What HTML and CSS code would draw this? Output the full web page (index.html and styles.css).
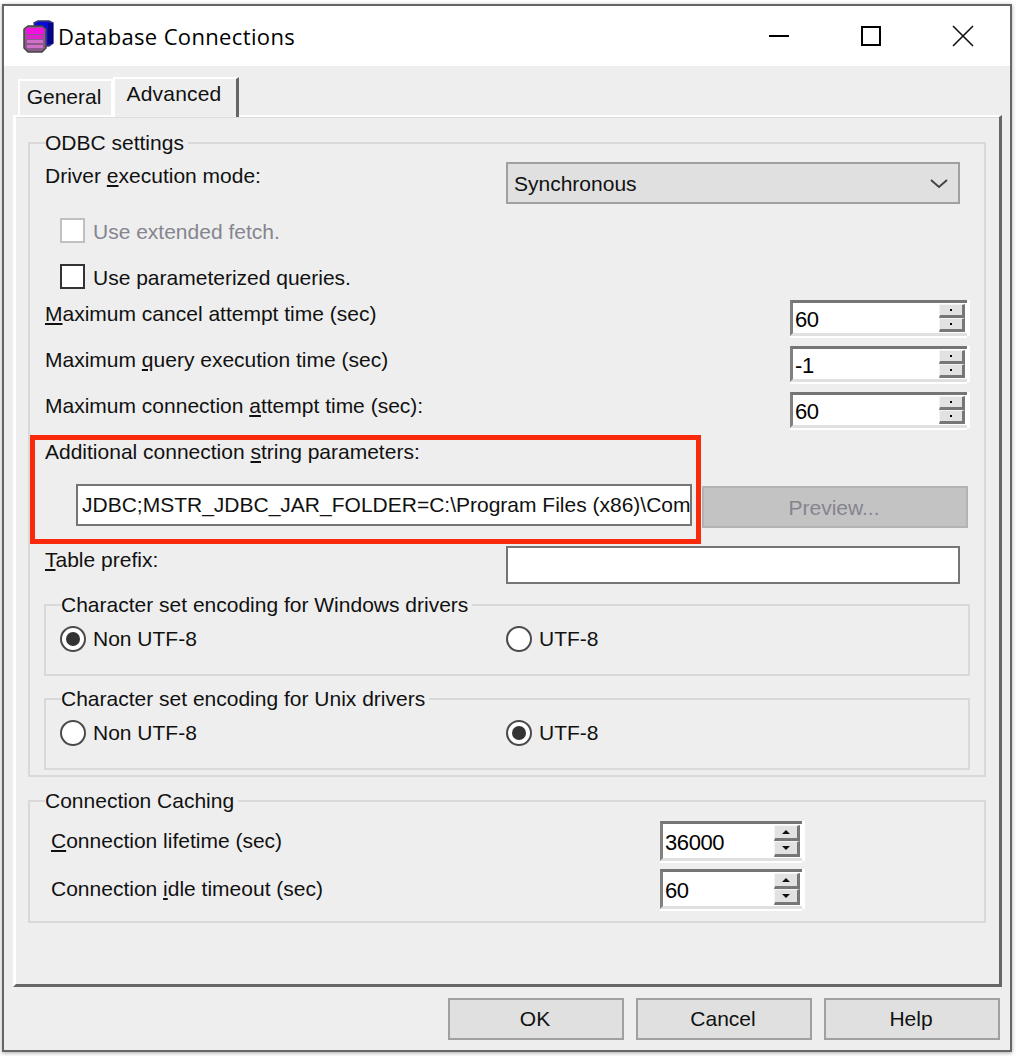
FILE: index.html
```html
<!DOCTYPE html>
<html lang="en">
<head>
    <meta charset="UTF-8">
    <title>Database Connections</title>
    <link rel="stylesheet" href="styles.css">
</head>
<body>

<div class="window">
    <!-- Title bar -->
    <div class="titlebar">
        <svg class="app-icon" width="32" height="34" viewBox="0 0 32 34">
            <path d="M12 4 L16 2 H27 L31 4 V24 L27 27 H16 Z" fill="#0a0ad8" stroke="#3a3a70" stroke-width="1.5"/>
            <rect x="26" y="4" width="5" height="21" fill="#05058a"/>
            <path d="M2 10 L6 7 H20 L24 10 V29 L20 33 H6 L2 29 Z" fill="#8a5a8a" stroke="#444" stroke-width="1.5"/>
            <rect x="4" y="9" width="18" height="6" fill="#f010e0"/>
            <rect x="5" y="16" width="16" height="4" fill="#e020d0"/>
            <rect x="5" y="21" width="16" height="3" fill="#d070c8"/>
            <rect x="5" y="26" width="16" height="3" fill="#d070c8"/>
        </svg>
        <span class="title">Database Connections</span>
        <div class="win-controls">
            <svg width="22" height="22" viewBox="0 0 22 22"><path d="M1 11 H21" stroke="#000" stroke-width="2"/></svg>
            <svg width="22" height="22" viewBox="0 0 22 22"><rect x="2" y="2" width="18" height="18" fill="none" stroke="#000" stroke-width="2"/></svg>
            <svg width="22" height="22" viewBox="0 0 22 22"><path d="M1 1 L21 21 M21 1 L1 21" stroke="#111" stroke-width="1.6"/></svg>
        </div>
    </div>

    <!-- Tabs -->
    <div class="tabs">
        <div class="tab">General</div>
        <div class="tab tab-active">Advanced</div>
    </div>

    <div class="panel">
        <fieldset class="group group-odbc">
            <legend>ODBC settings</legend>

            <div class="row row-mode">
                <span class="label">Driver <u>e</u>xecution mode:</span>
                <div class="select">
                    <span>Synchronous</span>
                    <svg width="18" height="10" viewBox="0 0 18 10"><path d="M1 1 L9 8 L17 1" fill="none" stroke="#444" stroke-width="2"/></svg>
                </div>
            </div>

            <div class="check-row check-first disabled">
                <span class="checkbox"></span>
                <span>Use extended fetch.</span>
            </div>
            <div class="check-row check-second">
                <span class="checkbox"></span>
                <span>Use parameterized queries.</span>
            </div>

            <div class="row row-spin first-spin">
                <span class="label"><u>M</u>aximum cancel attempt time (sec)</span>
                <div class="spin spin-wide">
                    <div class="spin-value">60</div>
                    <div class="spin-btns"><span class="spin-btn"><i class="dot"></i></span><span class="spin-btn"><i class="dot"></i></span></div>
                </div>
            </div>
            <div class="row row-spin">
                <span class="label">Maximum <u>q</u>uery execution time (sec)</span>
                <div class="spin spin-wide">
                    <div class="spin-value">-1</div>
                    <div class="spin-btns"><span class="spin-btn"><i class="dot"></i></span><span class="spin-btn"><i class="dot"></i></span></div>
                </div>
            </div>
            <div class="row row-spin">
                <span class="label">Maximum connection <u>a</u>ttempt time (sec):</span>
                <div class="spin spin-wide">
                    <div class="spin-value">60</div>
                    <div class="spin-btns"><span class="spin-btn"><i class="dot"></i></span><span class="spin-btn"><i class="dot"></i></span></div>
                </div>
            </div>

            <div class="conn-string">
                <div class="highlight"></div>
                <div class="conn-label">Additional connection <u>s</u>tring parameters:</div>
                <div class="conn-row">
                    <div class="conn-input"><span>JDBC;MSTR_JDBC_JAR_FOLDER=C:\Program Files (x86)\Com</span></div>
                    <div class="preview-btn">Preview...</div>
                </div>
            </div>

            <div class="row row-prefix">
                <span class="label"><u>T</u>able prefix:</span>
                <div class="text-box"></div>
            </div>

            <fieldset class="group group-charset">
                <legend>Character set encoding for Windows drivers</legend>
                <div class="radio-row">
                    <div class="radio-item"><span class="radio checked"></span><span>Non UTF-8</span></div>
                    <div class="radio-item"><span class="radio"></span><span>UTF-8</span></div>
                </div>
            </fieldset>

            <fieldset class="group group-charset group-unix">
                <legend>Character set encoding for Unix drivers</legend>
                <div class="radio-row">
                    <div class="radio-item"><span class="radio"></span><span>Non UTF-8</span></div>
                    <div class="radio-item"><span class="radio checked"></span><span>UTF-8</span></div>
                </div>
            </fieldset>
        </fieldset>

        <fieldset class="group group-cache">
            <legend>Connection Caching</legend>
            <div class="cache-row">
                <span class="cache-label"><u>C</u>onnection lifetime (sec)</span>
                <div class="spin spin-small">
                    <div class="spin-value">36000</div>
                    <div class="spin-btns"><span class="spin-btn"><i class="arrow-up"></i></span><span class="spin-btn"><i class="arrow-down"></i></span></div>
                </div>
            </div>
            <div class="cache-row">
                <span class="cache-label">Connection <u>i</u>dle timeout (sec)</span>
                <div class="spin spin-small">
                    <div class="spin-value">60</div>
                    <div class="spin-btns"><span class="spin-btn"><i class="arrow-up"></i></span><span class="spin-btn"><i class="arrow-down"></i></span></div>
                </div>
            </div>
        </fieldset>
    </div>

    <!-- Bottom buttons -->
    <div class="footer">
        <div class="btn">OK</div>
        <div class="btn">Cancel</div>
        <div class="btn">Help</div>
    </div>
</div>

</body>
</html>
```

FILE: styles.css
```css
* {
    box-sizing: border-box;
}

html, body {
    margin: 0;
    background-color: #fff;
}

body {
    padding: 4px 0 0 2px;
    height: 1056px;
    overflow: hidden;
    font-family: 'Liberation Sans', Arial, sans-serif;
    font-size: 21px;
    color: #111;
}

.window {
    width: 1010px;
    height: 1048px;
    border: 2px solid #666;
    background-color: #eee;
    box-shadow: 0 1px 4px rgba(0, 0, 0, 0.35);
}

/* Title bar */
.titlebar {
    display: flex;
    align-items: center;
    height: 60px;
    padding-left: 18px;
    background-color: #fff;
}

.app-icon {
    flex: none;
    margin-right: 4px;
}

.title {
    font-family: 'Open Sans', sans-serif;
    font-size: 22px;
    letter-spacing: 0.35px;
    color: #000;
}

.win-controls {
    display: flex;
    align-items: center;
    gap: 70px;
    margin-left: auto;
    margin-right: 36px;
}

/* Tabs */
.tabs {
    display: flex;
    align-items: flex-end;
    height: 49px;
    padding-left: 14px;
}

.tab {
    display: flex;
    align-items: center;
    justify-content: center;
    width: 95px;
    height: 36px;
    padding: 0 3px 2px 0;
    border: 2px solid #fff;
    border-bottom: none;
}

.tab-active {
    width: 126px;
    height: 40px;
    padding: 0 3px 8px 0;
    border-right: 3px solid #666;
    position: relative;
    top: 2px;
    background-color: #eee;
    letter-spacing: 0.2px;
}

.panel {
    width: 989px;
    height: 872px;
    margin-left: 9px;
    padding: 15px 14px 0 12px;
    border-top: 2px solid #fff;
    border-left: 3px solid #fff;
    border-right: 3px solid #666;
    border-bottom: 3px solid #666;
    box-shadow: inset 0 1px 0 #dedede;
}

/* Group boxes */
.group {
    margin: 0;
    padding: 8px 0 0 15px;
    min-width: 0;
    border: 2px solid #d9d9d9;
}

.group legend {
    height: 22px;
    line-height: 22px;
    margin-left: 1px;
    padding: 0 4px 0 0;
    background-color: #eee;
}

.group-odbc {
    width: 958px;
    height: 645px;
}

.group-odbc > legend {
    margin-left: 0;
}

.group-charset {
    width: 926px;
    height: 82px;
    margin-top: 10px;
    margin-left: -1px;
    padding-left: 14px;
    padding-top: 0;
}

.group-unix {
    margin-top: 12px;
}

.group-cache {
    width: 958px;
    height: 133px;
    margin-top: 13px;
    padding-left: 21px;
}

.group-cache > legend {
    margin-left: -6px;
}

/* Rows */
.row {
    display: flex;
}

.row-mode {
    height: 42px;
}

.label {
    width: 461px;
    flex: none;
    line-height: 28px;
}

.row-spin .label {
    width: 745px;
    line-height: 28px;
}

.row-spin {
    height: 38px;
    margin-top: 8px;
}

.first-spin {
    margin-top: 11px;
}

.select {
    display: flex;
    align-items: center;
    justify-content: space-between;
    width: 454px;
    height: 42px;
    padding: 2px 10px 0 6px;
    background-color: #e0e0e0;
    border: 2px solid #a0a0a0;
}

.check-row {
    display: flex;
    align-items: center;
    gap: 8px;
    height: 25px;
    margin-left: 15px;
}

.check-row span:last-child {
    padding-top: 2px;
}

.check-row .checkbox {
    padding-top: 0;
}

.check-first {
    margin-top: 14px;
}

.check-second {
    margin-top: 21px;
}

.checkbox {
    width: 25px;
    height: 25px;
    background-color: #fff;
    border: 2px solid #333;
}

.disabled {
    color: #85858f;
}

.disabled .checkbox {
    border-color: #c0c0c0;
}

/* Spin boxes */
.spin {
    display: flex;
    justify-content: space-between;
    padding: 1px 3px 1px 2px;
    background-color: #fff;
    border-top: 3px solid #757575;
    border-left: 3px solid #808080;
    border-bottom: 3px solid #e0e0e0;
    box-shadow: 0 2px 0 #fff, 3px 0 0 #fff;
}

.spin-wide {
    width: 177px;
    height: 36px;
}

.spin-small {
    width: 142px;
    height: 40px;
}

.spin-value {
    font-size: 22px;
    letter-spacing: -0.4px;
    line-height: 32px;
    color: #000;
}

.spin-small .spin-value {
    line-height: 36px;
}

.spin-btns {
    display: flex;
    flex-direction: column;
    justify-content: space-between;
    width: 26px;
    margin-right: -1px;
}

.spin-btn {
    display: flex;
    align-items: center;
    justify-content: center;
    height: 14px;
    background-color: #e2e2e2;
    border-top: 1px solid #f4f4f4;
    border-left: 1px solid #f4f4f4;
    border-right: 3px solid #777;
    border-bottom: 3px solid #777;
}

.spin-small .spin-btn {
    height: 16px;
}

.dot {
    width: 2px;
    height: 2px;
    background-color: #000;
}

.arrow-up {
    border-left: 4px solid transparent;
    border-right: 4px solid transparent;
    border-bottom: 4px solid #111;
}

.arrow-down {
    border-left: 4px solid transparent;
    border-right: 4px solid transparent;
    border-top: 4px solid #111;
}

/* Connection string */
.conn-string {
    position: relative;
    height: 86px;
    margin-top: 11px;
}

/* red annotation drawn over the dialog */
.highlight {
    position: absolute;
    left: -15px;
    top: -6px;
    width: 671px;
    height: 109px;
    border: 5px solid #f92a0c;
}

.conn-label {
    height: 22px;
    line-height: 22px;
}

.conn-row {
    display: flex;
    margin-top: 21px;
    margin-left: 31px;
}

.conn-input {
    width: 616px;
    height: 42px;
    padding: 0 2px 0 4px;
    overflow: hidden;
    white-space: nowrap;
    line-height: 38px;
    background-color: #fff;
    border: 2px solid #757575;
}

.preview-btn {
    width: 266px;
    height: 42px;
    margin: 2px 0 0 10px;
    padding-right: 2px;
    text-align: center;
    line-height: 40px;
    color: #85858f;
    background-color: #c3c3c3;
    border: 2px solid #b3b3b3;
}

.row-prefix {
    height: 38px;
    margin-top: 19px;
}

.text-box {
    width: 454px;
    height: 38px;
    background-color: #fff;
    border: 2px solid #757575;
}

/* Radio buttons */
.radio-row {
    display: flex;
    height: 26px;
    margin-top: 10px;
}

.radio-item {
    display: flex;
    align-items: center;
    gap: 7px;
    width: 447px;
}

.radio-item:last-child {
    margin-left: -1px;
}

.radio {
    display: flex;
    align-items: center;
    justify-content: center;
    width: 26px;
    height: 26px;
    background-color: #fff;
    border: 2px solid #4a4a4a;
    border-radius: 50%;
}

.checked::after {
    content: "";
    width: 14px;
    height: 14px;
    border-radius: 50%;
    background-color: #333;
}

/* Connection caching */
.cache-row {
    display: flex;
    align-items: center;
    height: 42px;
    margin-bottom: 6px;
}

.cache-label {
    width: 609px;
    flex: none;
}

/* Footer */
.footer {
    display: flex;
    justify-content: flex-end;
    gap: 12px;
    padding: 11px 10px 0 0;
}

.btn {
    width: 176px;
    height: 42px;
    padding-right: 2px;
    text-align: center;
    line-height: 38px;
    background-color: #e0e0e0;
    border: 2px solid #a0a0a0;
}
```
